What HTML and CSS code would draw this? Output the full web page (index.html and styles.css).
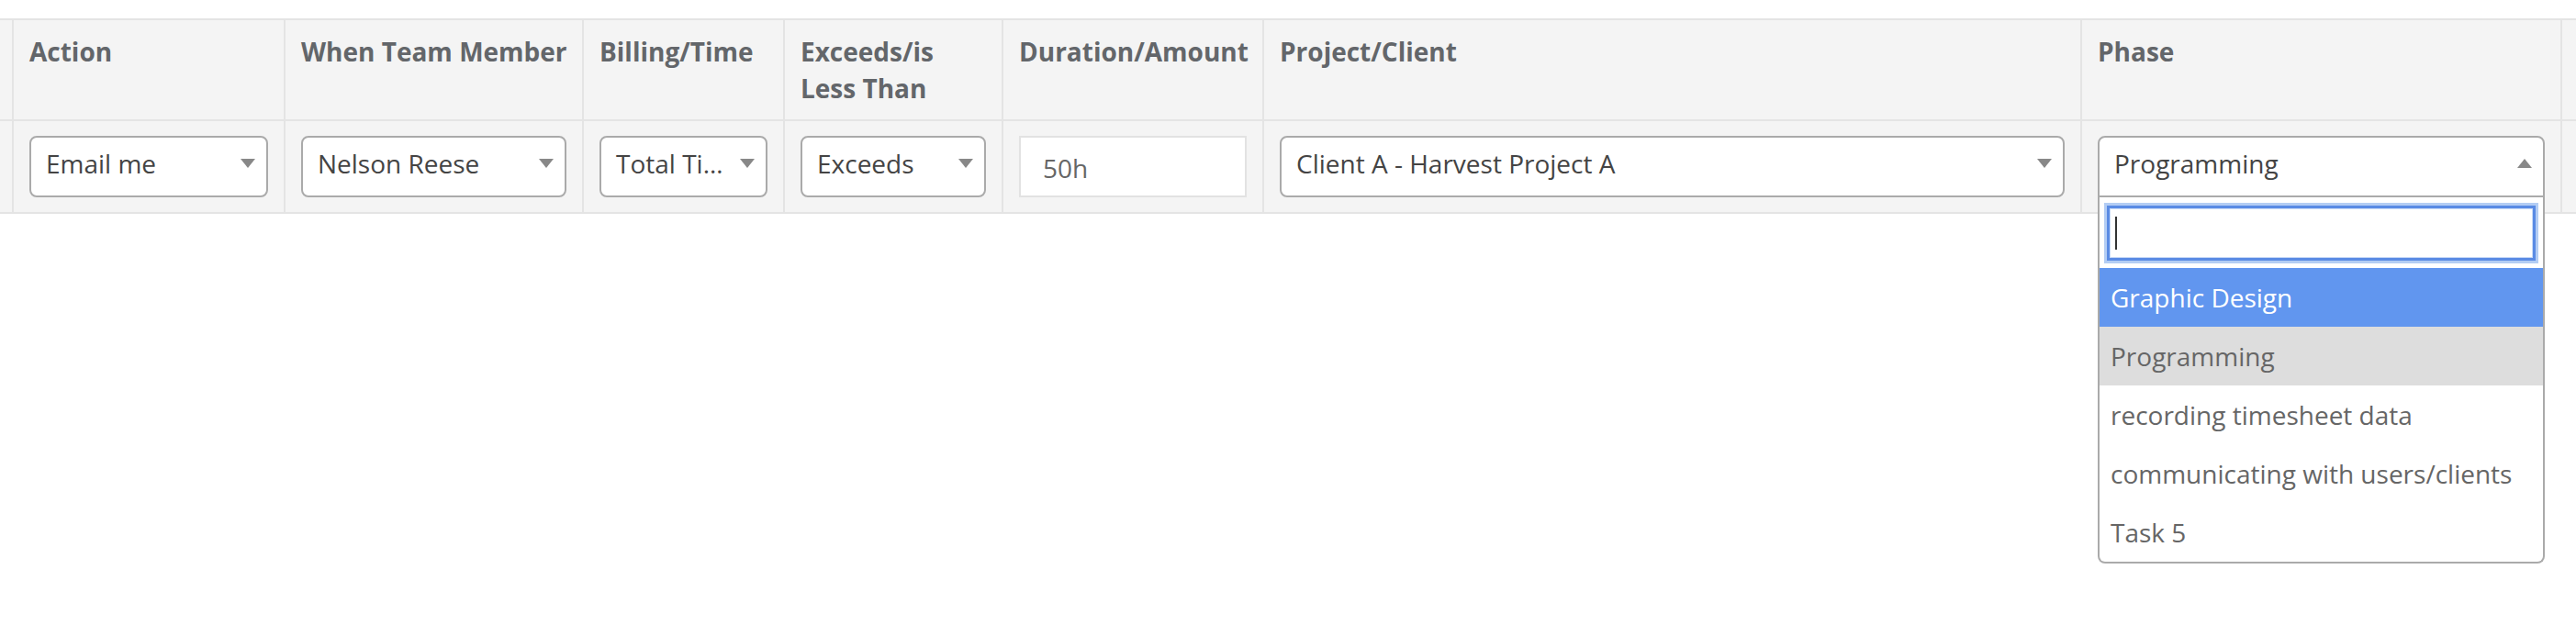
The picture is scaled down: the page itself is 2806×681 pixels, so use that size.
FILE: index.html
```html
<!DOCTYPE html>
<html lang="en">
<head>
<meta charset="utf-8">
<title>Alert rules</title>
<link rel="stylesheet" href="styles.css">
</head>
<body>
<div class="page">
  <div class="grid">
    <div class="th stub"></div>
    <div class="th">Action</div>
    <div class="th">When Team Member</div>
    <div class="th">Billing/Time</div>
    <div class="th">Exceeds/is<br>Less Than</div>
    <div class="th">Duration/Amount</div>
    <div class="th">Project/Client</div>
    <div class="th">Phase</div>
    <div class="th"></div>

    <div class="td stub"></div>
    <div class="td">
      <div class="select"><span class="value">Email me</span><span class="arrow"></span></div>
    </div>
    <div class="td">
      <div class="select"><span class="value">Nelson Reese</span><span class="arrow"></span></div>
    </div>
    <div class="td">
      <div class="select"><span class="value">Total Time</span><span class="arrow"></span></div>
    </div>
    <div class="td">
      <div class="select"><span class="value">Exceeds</span><span class="arrow"></span></div>
    </div>
    <div class="td">
      <div class="input">50h</div>
    </div>
    <div class="td">
      <div class="select"><span class="value">Client A - Harvest Project A</span><span class="arrow"></span></div>
    </div>
    <div class="td">
      <div class="select open"><span class="value">Programming</span><span class="arrow up"></span>
        <div class="dropdown">
          <div class="search"><div class="search-field"><span class="caret"></span></div></div>
          <ul class="options">
            <li class="option highlighted">Graphic Design</li>
            <li class="option selected">Programming</li>
            <li class="option">recording timesheet data</li>
            <li class="option">communicating with users/clients</li>
            <li class="option">Task 5</li>
          </ul>
        </div>
      </div>
    </div>
    <div class="td"></div>
  </div>
</div>
</body>
</html>
```

FILE: styles.css
```css
html, body {
  margin: 0;
  padding: 0;
  background: #ffffff;
}

body {
  font-family: "Open Sans", "Liberation Sans", sans-serif;
  font-size: 28px;
  color: #444444;
}

.page {
  padding-top: 20px;
  min-height: 681px;
  box-sizing: border-box;
}

.grid {
  display: grid;
  grid-template-columns: 13px 296px 325px 219px 238px 284px 891px 523px 17px;
  border-top: 2px solid #e4e4e4;
}

.th,
.td {
  background: #f4f4f4;
  border-left: 2px solid #e4e4e4;
  border-bottom: 2px solid #e4e4e4;
  padding: 0 17px;
  min-width: 0;
}

.th.stub,
.td.stub {
  border-left: none;
  padding: 0;
}

.th {
  padding-top: 14px;
  padding-bottom: 14px;
  font-weight: 700;
  line-height: 40px;
  color: #63666a;
  white-space: nowrap;
}

.td {
  padding-top: 16px;
  padding-bottom: 16px;
}

.select {
  position: relative;
  display: flex;
  height: 67px;
  box-sizing: border-box;
  background: #ffffff;
  border: 2px solid #aaaaaa;
  border-radius: 8px;
}

.select.open {
  border-radius: 8px 8px 0 0;
  z-index: 5;
}

.value {
  flex: 1;
  min-width: 0;
  padding-left: 16px;
  line-height: 56px;
  white-space: nowrap;
  overflow: hidden;
  text-overflow: ellipsis;
  color: #444444;
}

.arrow {
  flex: none;
  width: 40px;
  display: flex;
  justify-content: center;
  padding-top: 23px;
  box-sizing: border-box;
}

.arrow::before {
  content: "";
  width: 0;
  height: 0;
  border-style: solid;
  border-width: 10px 8px 0 8px;
  border-color: #888888 transparent transparent transparent;
}

.arrow.up::before {
  border-width: 0 8px 10px 8px;
  border-color: transparent transparent #888888 transparent;
}

.input {
  height: 67px;
  box-sizing: border-box;
  background: #ffffff;
  border: 2px solid #e2e2e2;
  padding-left: 24px;
  line-height: 66px;
  color: #666666;
}

.dropdown {
  position: absolute;
  top: 100%;
  left: -2px;
  right: -2px;
  margin-top: 2px;
  background: #ffffff;
  border: 2px solid #aaaaaa;
  border-top: none;
  border-radius: 0 0 8px 8px;
  z-index: 10;
}

.search {
  padding: 9px 8px 8px;
}

.search-field {
  height: 60px;
  box-sizing: border-box;
  border: 3px solid #5a8be4;
  box-shadow: 0 0 0 3px #b3cdf4, inset 0 0 0 1px #c9dbf7;
  background: #ffffff;
  padding: 9px 6px;
}

.caret {
  display: block;
  width: 2px;
  height: 36px;
  background: #333333;
}

.options {
  list-style: none;
  margin: 0;
  padding: 0;
}

.option {
  padding: 12px 12px;
  line-height: 40px;
  color: #666666;
  white-space: nowrap;
}

.option.highlighted {
  background: #6196ef;
  color: #ffffff;
}

.option.selected {
  background: #dddddd;
}
```
